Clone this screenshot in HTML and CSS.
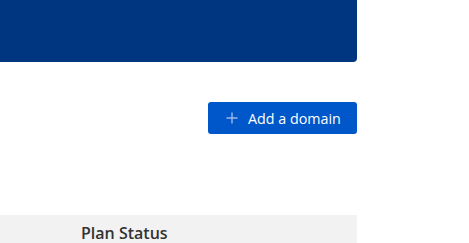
FILE: index.html
```html
<!DOCTYPE html>
<html lang="en">
<head>
    <meta charset="UTF-8">
    <meta name="viewport" content="width=device-width, initial-scale=1.0">
    <title>Domains</title>
    <link rel="stylesheet" href="styles.css">
</head>
<body>
    <div class="container">
        <div class="banner"></div>

        <div class="toolbar">
            <button class="add-button" type="button">
                <svg class="plus-icon" width="12" height="12" viewBox="0 0 12 12" aria-hidden="true">
                    <path d="M6 0.5v11M0.5 6h11" stroke="currentColor" stroke-width="1.4" fill="none"/>
                </svg>
                <span>Add a domain</span>
            </button>
        </div>

        <div class="table-head">
            <div class="col-spacer"></div>
            <div class="col-title">Plan Status</div>
        </div>
    </div>
</body>
</html>
```

FILE: styles.css
```css
:root {
    --navy: #003580;
    --blue: #0057c9;
    --head-bg: #f2f2f2;
    --text: #333333;
}

* {
    margin: 0;
    padding: 0;
    box-sizing: border-box;
}

body {
    font-family: 'Open Sans', sans-serif;
    background: #ffffff;
    color: var(--text);
}

.container {
    width: 357px;
}

.banner {
    height: 62px;
    background: var(--navy);
    border-radius: 0 0 4px 0;
}

.toolbar {
    display: flex;
    justify-content: flex-end;
    margin-top: 40px;
}

.add-button {
    display: flex;
    align-items: center;
    gap: 10px;
    width: 149px;
    height: 32px;
    padding: 0 0 0 18px;
    background: var(--blue);
    color: #ffffff;
    border: none;
    border-radius: 3px;
    font-family: inherit;
    font-size: 14.3px;
    cursor: pointer;
}

.plus-icon {
    color: #9db8e6;
    flex-shrink: 0;
}

.table-head {
    display: flex;
    margin-top: 81px;
    background: var(--head-bg);
    padding-top: 6px;
    height: 40px;
}

.col-spacer {
    width: 81px;
}

.col-title {
    font-size: 16px;
    font-weight: 600;
    line-height: 24px;
    color: var(--text);
}
```
